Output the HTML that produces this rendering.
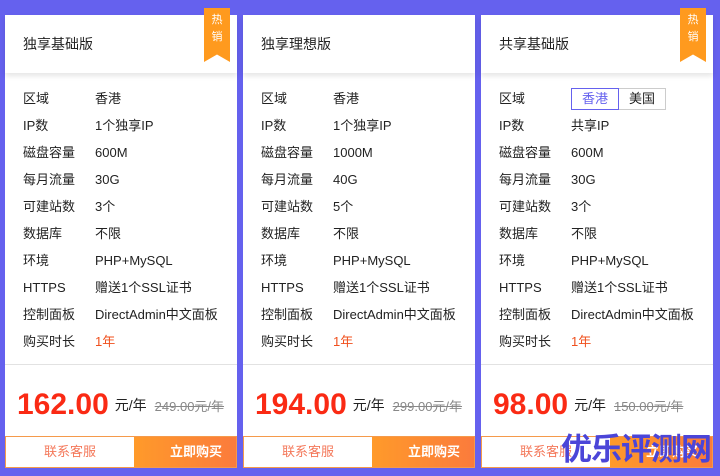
<!DOCTYPE html>
<html><head><meta charset="utf-8"><style>
*{margin:0;padding:0;box-sizing:border-box}
html,body{width:720px;height:476px;overflow:hidden}
body{background:#6561ee;font-family:"Liberation Sans","Noto Sans CJK SC",sans-serif;position:relative;color:#222}
.card{position:absolute;top:15px;width:232px;height:453px;background:#fff}
.hd{height:58px;box-shadow:0 3px 5px rgba(0,0,0,.1);position:relative;font-size:14px;padding:19px 0 0 18px}
.rib{position:absolute;top:-7px;right:7px;width:26px;height:54px;background:#ff9a1e;color:#fff;font-size:11px;text-align:center;line-height:17px;padding-top:4px;clip-path:polygon(0 0,100% 0,100% 100%,50% 86%,0 100%)}
.rows{position:absolute;top:75px;left:18px;font-size:13px}
.row{height:27px;line-height:17px;display:flex}
.row>span:first-child{width:72px}
.o{color:#f0501e}
.div{position:absolute;top:349px;left:0;right:0;border-top:1px solid #e2e2e2}
.price{position:absolute;top:373px;left:12px;white-space:nowrap}
.big{font-size:30px;font-weight:bold;color:#fa2a14;vertical-align:middle}
.unit{font-size:14px;margin-left:6px;vertical-align:middle}
.old{font-size:13px;color:#888;text-decoration:line-through;margin-left:8px;vertical-align:middle}
.btns{position:absolute;bottom:0;left:0;right:0;height:32px;display:flex;border:1px solid #f59a4b}
.b1{width:128px;text-align:center;line-height:30px;font-size:13px;color:#f4785a}
.b2{flex:1;background:linear-gradient(90deg,#ff9a2a,#fb7b3c);color:#fff;font-size:13px;font-weight:bold;line-height:30px;text-align:right;padding-right:14px}
.tag{display:inline-block;border:1px solid #ccc;height:22px;line-height:20px;padding:0 10px;margin-top:-3px}
.wm{position:absolute;left:561px;top:430px;font-size:31px;line-height:40px;font-weight:bold;color:#4b45d8;white-space:nowrap;letter-spacing:-1px}
</style></head><body>

<div class="card" style="left:5px">
<div class="hd">独享基础版<div class="rib">热<br>销</div></div>
<div class="rows">
<div class="row"><span>区域</span><span>香港</span></div>
<div class="row"><span>IP数</span><span>1个独享IP</span></div>
<div class="row"><span>磁盘容量</span><span>600M</span></div>
<div class="row"><span>每月流量</span><span>30G</span></div>
<div class="row"><span>可建站数</span><span>3个</span></div>
<div class="row"><span>数据库</span><span>不限</span></div>
<div class="row"><span>环境</span><span>PHP+MySQL</span></div>
<div class="row"><span>HTTPS</span><span>赠送1个SSL证书</span></div>
<div class="row"><span>控制面板</span><span>DirectAdmin中文面板</span></div>
<div class="row"><span>购买时长</span><span class="o">1年</span></div>
</div>
<div class="div"></div>
<div class="price"><span class="big">162.00</span><span class="unit">元/年</span><span class="old">249.00元/年</span></div>
<div class="btns"><div class="b1">联系客服</div><div class="b2">立即购买</div></div>
</div>

<div class="card" style="left:243px">
<div class="hd">独享理想版</div>
<div class="rows">
<div class="row"><span>区域</span><span>香港</span></div>
<div class="row"><span>IP数</span><span>1个独享IP</span></div>
<div class="row"><span>磁盘容量</span><span>1000M</span></div>
<div class="row"><span>每月流量</span><span>40G</span></div>
<div class="row"><span>可建站数</span><span>5个</span></div>
<div class="row"><span>数据库</span><span>不限</span></div>
<div class="row"><span>环境</span><span>PHP+MySQL</span></div>
<div class="row"><span>HTTPS</span><span>赠送1个SSL证书</span></div>
<div class="row"><span>控制面板</span><span>DirectAdmin中文面板</span></div>
<div class="row"><span>购买时长</span><span class="o">1年</span></div>
</div>
<div class="div"></div>
<div class="price"><span class="big">194.00</span><span class="unit">元/年</span><span class="old">299.00元/年</span></div>
<div class="btns"><div class="b1">联系客服</div><div class="b2">立即购买</div></div>
</div>

<div class="card" style="left:481px">
<div class="hd">共享基础版<div class="rib">热<br>销</div></div>
<div class="rows">
<div class="row"><span>区域</span><span><span class="tag" style="border-color:#6561ee;color:#6561ee">香港</span><span class="tag" style="border-left:0">美国</span></span></div>
<div class="row"><span>IP数</span><span>共享IP</span></div>
<div class="row"><span>磁盘容量</span><span>600M</span></div>
<div class="row"><span>每月流量</span><span>30G</span></div>
<div class="row"><span>可建站数</span><span>3个</span></div>
<div class="row"><span>数据库</span><span>不限</span></div>
<div class="row"><span>环境</span><span>PHP+MySQL</span></div>
<div class="row"><span>HTTPS</span><span>赠送1个SSL证书</span></div>
<div class="row"><span>控制面板</span><span>DirectAdmin中文面板</span></div>
<div class="row"><span>购买时长</span><span class="o">1年</span></div>
</div>
<div class="div"></div>
<div class="price"><span class="big">98.00</span><span class="unit">元/年</span><span class="old">150.00元/年</span></div>
<div class="btns"><div class="b1">联系客服</div><div class="b2">立即购买</div></div>
</div>

<div class="wm">优乐评测网</div>
</body></html>
